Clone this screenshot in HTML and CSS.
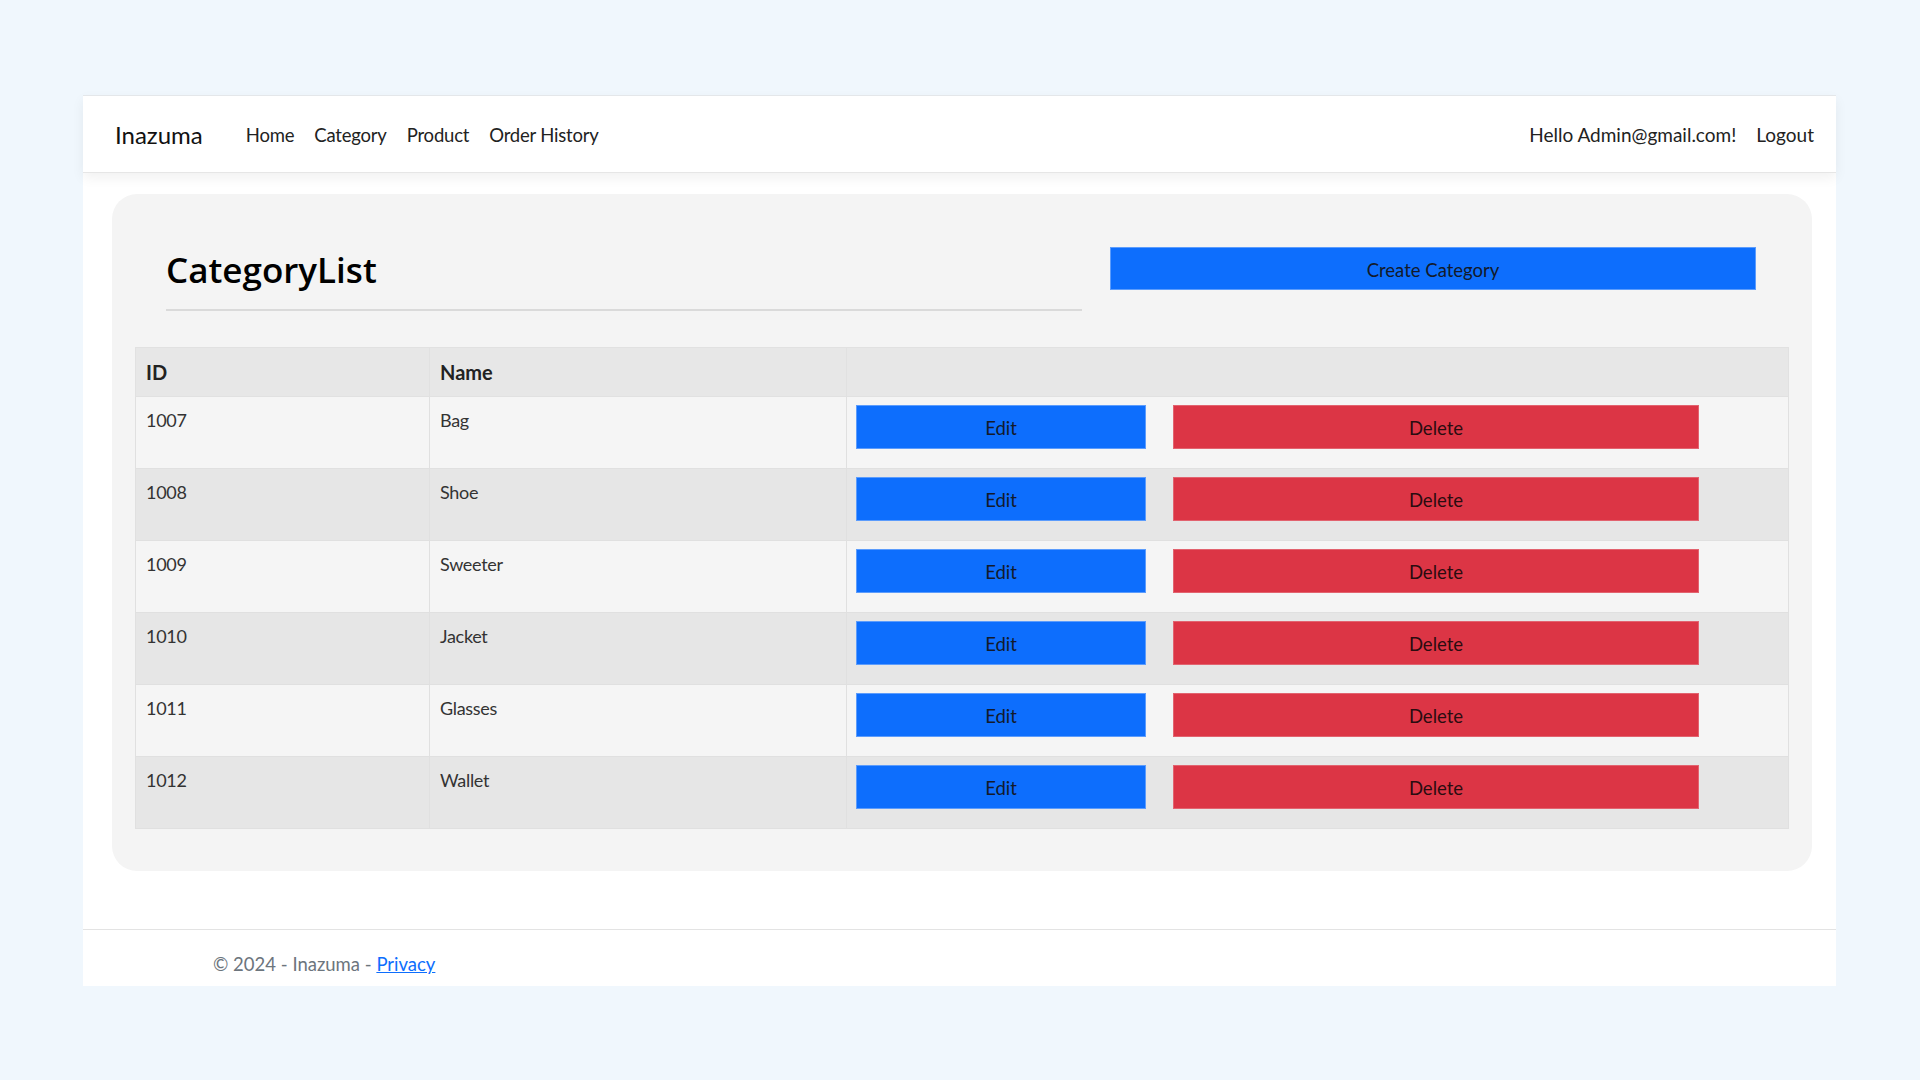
FILE: index.html
```html
<!DOCTYPE html>
<html lang="en">
<head>
<meta charset="utf-8">
<title>CategoryList - Inazuma</title>
<link rel="stylesheet" href="styles.css">
</head>
<body>
<div class="page">
  <header class="navbar">
    <a class="brand" href="#">Inazuma</a>
    <nav class="nav-main">
      <a class="nav-link" href="#">Home</a>
      <a class="nav-link" href="#">Category</a>
      <a class="nav-link" href="#">Product</a>
      <a class="nav-link" href="#">Order History</a>
    </nav>
    <div class="nav-user">
      <span class="nav-link">Hello Admin@gmail.com!</span>
      <a class="nav-link" href="#">Logout</a>
    </div>
  </header>

  <main class="main">
    <section class="card">
      <div class="card-head">
        <div class="title-col">
          <h3 class="title">CategoryList</h3>
          <hr class="title-rule">
        </div>
        <div class="action-col">
          <a class="btn btn-primary btn-create" href="#">Create Category</a>
        </div>
      </div>

      <table class="table">
        <colgroup>
          <col class="col-id">
          <col class="col-name">
          <col class="col-actions">
        </colgroup>
        <thead>
          <tr><th>ID</th><th>Name</th><th></th></tr>
        </thead>
        <tbody>
          <tr><td>1007</td><td>Bag</td><td class="cell-actions"><div class="actions"><a class="btn btn-primary btn-edit" href="#">Edit</a><a class="btn btn-danger btn-delete" href="#">Delete</a></div></td></tr>
          <tr><td>1008</td><td>Shoe</td><td class="cell-actions"><div class="actions"><a class="btn btn-primary btn-edit" href="#">Edit</a><a class="btn btn-danger btn-delete" href="#">Delete</a></div></td></tr>
          <tr><td>1009</td><td>Sweeter</td><td class="cell-actions"><div class="actions"><a class="btn btn-primary btn-edit" href="#">Edit</a><a class="btn btn-danger btn-delete" href="#">Delete</a></div></td></tr>
          <tr><td>1010</td><td>Jacket</td><td class="cell-actions"><div class="actions"><a class="btn btn-primary btn-edit" href="#">Edit</a><a class="btn btn-danger btn-delete" href="#">Delete</a></div></td></tr>
          <tr><td>1011</td><td>Glasses</td><td class="cell-actions"><div class="actions"><a class="btn btn-primary btn-edit" href="#">Edit</a><a class="btn btn-danger btn-delete" href="#">Delete</a></div></td></tr>
          <tr><td>1012</td><td>Wallet</td><td class="cell-actions"><div class="actions"><a class="btn btn-primary btn-edit" href="#">Edit</a><a class="btn btn-danger btn-delete" href="#">Delete</a></div></td></tr>
        </tbody>
      </table>
    </section>
  </main>

  <footer class="footer">
    <div class="footer-inner">&copy; 2024 - Inazuma - <a class="footer-link" href="#">Privacy</a></div>
  </footer>
</div>
</body>
</html>
```

FILE: styles.css
```css
* { box-sizing: border-box; }

html, body { margin: 0; padding: 0; }

body {
  background: #f0f7fd;
  font-family: "Lato", "Open Sans", "Noto Sans", sans-serif;
  color: #212529;
  font-size: 18.5px;
  line-height: 30px;
}

.page {
  width: 1753px;
  margin: 95px 0 0 83px;
  background: #ffffff;
}

/* ---------- navbar ---------- */
.navbar {
  display: flex;
  align-items: center;
  height: 78px;
  padding: 2px 12px 0 32px;
  border-top: 1px solid #e4e7ea;
  border-bottom: 1px solid #e6e6e6;
  box-shadow: 0 5px 12px rgba(0, 0, 0, 0.06);
  position: relative;
  z-index: 1;
  background: #ffffff;
}

.brand {
  font-size: 24px;
  line-height: 38px;
  color: #111111;
  text-decoration: none;
  margin-right: 33px;
}

.nav-main,
.nav-user {
  display: flex;
  align-items: center;
}

.nav-user { margin-left: auto; }

.nav-link {
  font-size: 18.5px;
  letter-spacing: -0.2px;
  line-height: 30px;
  padding: 10px;
  color: #222222;
  text-decoration: none;
}

.nav-user .nav-link {
  font-size: 19px;
  letter-spacing: 0;
}

/* ---------- main ---------- */
.main {
  padding: 21px 24px 58px 29px;
}

.card {
  width: 1700px;
  background: #f4f4f4;
  border-radius: 25px;
  padding: 0 23px 42px;
}

.card-head {
  display: flex;
  height: 153px;
  padding: 53px 33px 0 31px;
}

.title-col {
  width: 916px;
}

.title {
  margin: 2px 0 0;
  font-family: "Open Sans", "Noto Sans", sans-serif;
  font-size: 35px;
  line-height: 42px;
  font-weight: 600;
  color: #000000;
}

.title-rule {
  margin: 18px 0 0;
  border: 0;
  border-top: 2px solid #dadada;
  height: 0;
}

.action-col {
  flex: 1;
  margin-left: 28px;
}

.btn {
  display: flex;
  align-items: center;
  justify-content: center;
  height: 44px;
  padding-top: 2px;
  font-size: 18.5px;
  color: #131a2a;
  text-decoration: none;
}

.btn-primary {
  background: #0d6efd;
  border: 1px solid #5c9cfc;
}

.btn-danger {
  background: #dc3545;
  border: 1px solid #e2636f;
  color: #2a0c10;
}

.btn-create { height: 43px; }

/* ---------- table ---------- */
.table {
  width: 100%;
  border-collapse: collapse;
  table-layout: fixed;
  border: 1px solid #dedede;
}

.col-id { width: 294px; }
.col-name { width: 417px; }

.table th {
  background: #e7e7e7;
  text-align: left;
  font-size: 20px;
  font-weight: 700;
  padding: 9px 10px;
  height: 48px;
  border: 1px solid #e1e1e1;
  color: #222222;
}

.table td {
  padding: 8px 10px 33px;
  vertical-align: top;
  border: 1px solid #e0e0e0;
  color: #333333;
  font-size: 18px;
  letter-spacing: -0.3px;
  height: 72px;
}

.table tbody tr:nth-child(odd) td { background: #f5f5f5; }
.table tbody tr:nth-child(even) td { background: #e6e6e6; }

.table td.cell-actions {
  padding: 8px 9px 0;
  letter-spacing: 0;
}

.actions {
  display: flex;
  gap: 27px;
}

.btn-edit { width: 290px; }
.btn-delete { width: 526px; }

/* ---------- footer ---------- */
.footer {
  height: 57px;
  overflow: hidden;
  border-top: 1px solid #e3e3e3;
}

.footer-inner {
  padding-left: 130px;
  line-height: 69px;
  color: #6c757d;
  font-size: 18.5px;
}

.footer-link {
  color: #0d6efd;
  text-decoration: underline;
}
```
